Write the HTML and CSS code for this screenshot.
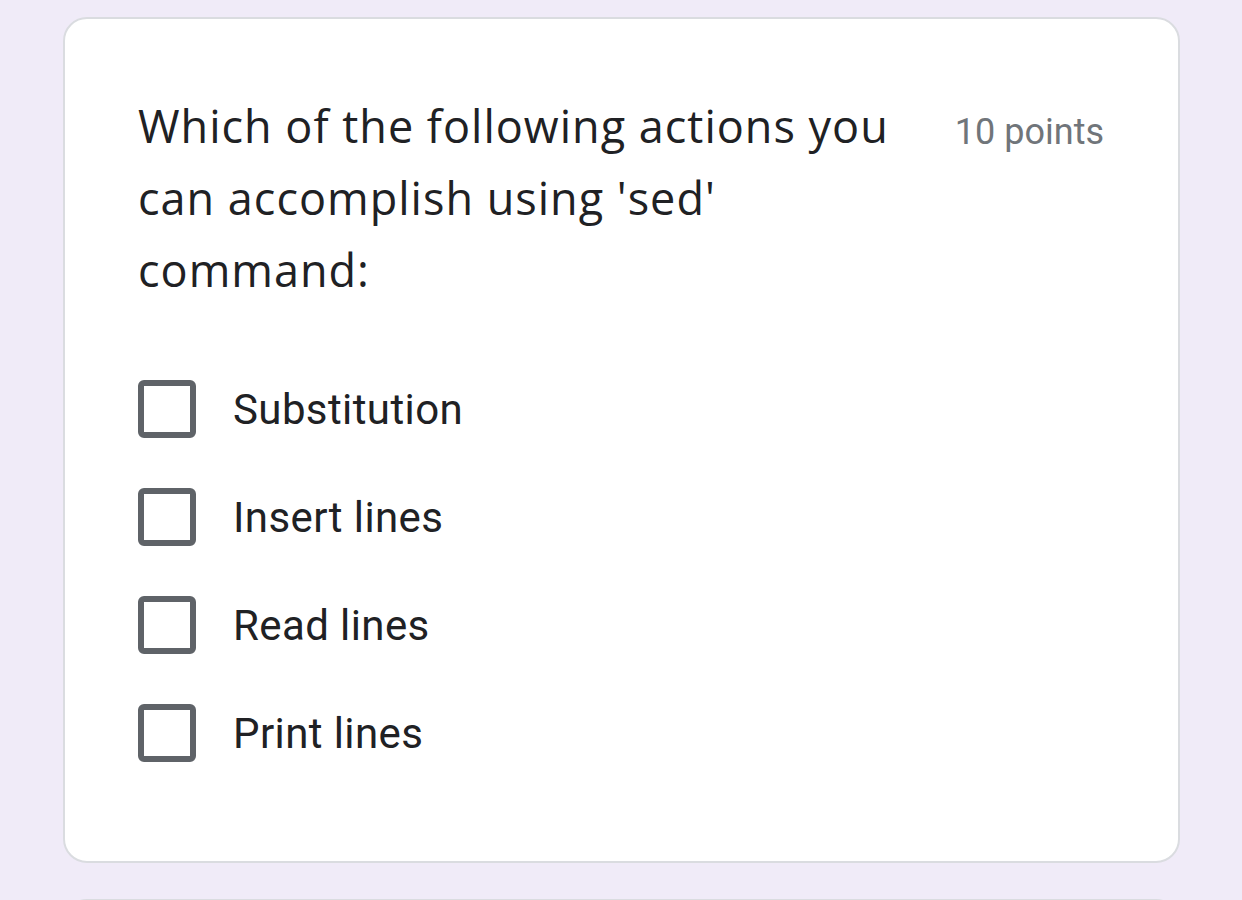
FILE: index.html
```html
<!DOCTYPE html>
<html>
<head>
<meta charset="utf-8">
<link rel="stylesheet" href="styles.css">
</head>
<body>
<main class="page">
  <section class="card">
    <div class="header">
      <div class="question">Which of the following actions you can accomplish using 'sed' command:</div>
      <div class="points">10 points</div>
    </div>
    <div class="options">
      <label class="option"><span class="box"></span><span class="label">Substitution</span></label>
      <label class="option"><span class="box"></span><span class="label">Insert lines</span></label>
      <label class="option"><span class="box"></span><span class="label">Read lines</span></label>
      <label class="option"><span class="box"></span><span class="label">Print lines</span></label>
    </div>
  </section>
  <section class="card next"></section>
</main>
</body>
</html>
```
FILE: styles.css
```css
html, body {
  margin: 0;
  padding: 0;
  background: #f0ebf8;
}
.page {
  padding: 17px 62px 0 63px;
  display: flex;
  flex-direction: column;
  gap: 36px;
  height: 900px;
  overflow: hidden;
  box-sizing: border-box;
}
.card {
  background: #fff;
  border: 2px solid #dadce0;
  border-radius: 24px;
  padding: 71px 74px 99px 73px;
  flex-shrink: 0;
}
.card.next {
  height: 200px;
  padding: 0;
}
.header {
  display: flex;
  justify-content: space-between;
  align-items: flex-start;
}
.question {
  width: 790px;
  font-family: "Open Sans", sans-serif;
  font-size: 45px;
  line-height: 72px;
  color: #202124;
  letter-spacing: 1px;
}
.points {
  font-family: Roboto, sans-serif;
  font-size: 36px;
  line-height: 72px;
  color: #70757a;
  white-space: nowrap;
  margin-top: 6px;
}
.options {
  margin-top: 74px;
  display: flex;
  flex-direction: column;
  gap: 50px;
}
.option {
  display: flex;
  align-items: center;
  gap: 37px;
  height: 58px;
}
.box {
  width: 58px;
  height: 58px;
  box-sizing: border-box;
  border: 6px solid #5f6368;
  border-radius: 6px;
  flex-shrink: 0;
}
.label {
  font-family: Roboto, sans-serif;
  font-size: 42px;
  color: #202124;
  letter-spacing: 0.4px;
}
```
